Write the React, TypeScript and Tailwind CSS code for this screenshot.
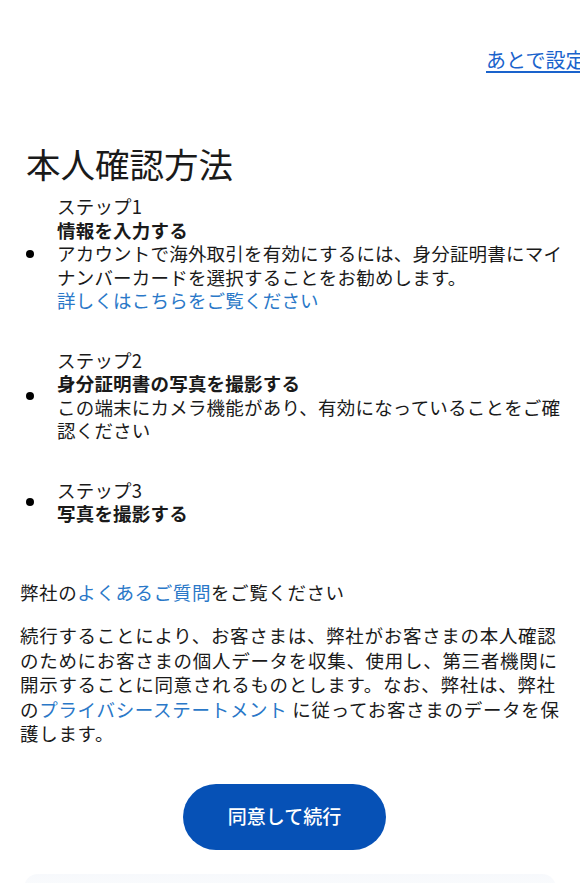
import React from "react";

const font = { fontFamily: '"Noto Sans CJK JP", "Noto Sans", sans-serif' };

function Step({ children }: { children: React.ReactNode }) {
  return (
    <li className="flex items-center">
      <span className="w-[57px] shrink-0 flex justify-start pl-[26px]">
        <span className="block w-[8px] h-[8px] rounded-full bg-black" />
      </span>
      <div className="text-[18.5px] leading-[23.5px] tracking-[0.2px] text-[#1a1a1a] whitespace-nowrap">{children}</div>
    </li>
  );
}

export default function App() {
  return (
    <div className="w-[580px] h-[883px] overflow-hidden bg-white relative" style={font}>
      <div className="pt-[47px] pl-[486px] whitespace-nowrap">
        <a className="text-[20px] leading-[25px] text-[#1a63cc] underline underline-offset-[3px]">あとで設定する</a>
      </div>

      <h1 className="mt-[70px] pl-[26px] text-[34.5px] leading-[40px] text-[#1a1a1a] font-normal">本人確認方法</h1>

      <ul className="mt-[12px] flex flex-col gap-[36px]">
        <Step>
          <div>ステップ1</div>
          <div className="font-bold">情報を入力する</div>
          <div>アカウントで海外取引を有効にするには、身分証明書にマイ</div>
          <div>ナンバーカードを選択することをお勧めします。</div>
          <div className="text-[#2a78c8]">詳しくはこちらをご覧ください</div>
        </Step>
        <Step>
          <div>ステップ2</div>
          <div className="font-bold">身分証明書の写真を撮影する</div>
          <div>この端末にカメラ機能があり、有効になっていることをご確</div>
          <div>認ください</div>
        </Step>
        <Step>
          <div>ステップ3</div>
          <div className="font-bold">写真を撮影する</div>
        </Step>
      </ul>

      <p className="mt-[54px] pl-[20px] text-[18.5px] leading-[24.5px] tracking-[0.6px] text-[#1a1a1a] whitespace-nowrap">
        弊社の<span className="text-[#2a78c8]">よくあるご質問</span>をご覧ください
      </p>

      <div className="mt-[19px] pl-[20px] text-[18.5px] leading-[24.5px] tracking-[0.7px] text-[#1a1a1a] whitespace-nowrap">
        <div>続行することにより、お客さまは、弊社がお客さまの本人確認</div>
        <div>のためにお客さまの個人データを収集、使用し、第三者機関に</div>
        <div>開示することに同意されるものとします。なお、弊社は、弊社</div>
        <div>
          の<span className="text-[#2a78c8]">プライバシーステートメント</span> に従ってお客さまのデータを保
        </div>
        <div>護します。</div>
      </div>

      <div className="mt-[38px] flex justify-center pr-[11px]">
        <button className="w-[203px] h-[66px] rounded-full bg-[#0651b6] text-white text-[19px] font-medium">
          同意して続行
        </button>
      </div>

      <div className="mt-[24px] mx-[24px] h-[40px] rounded-t-[14px] bg-gradient-to-b from-[#f7f9fc] to-white" />
    </div>
  );
}
